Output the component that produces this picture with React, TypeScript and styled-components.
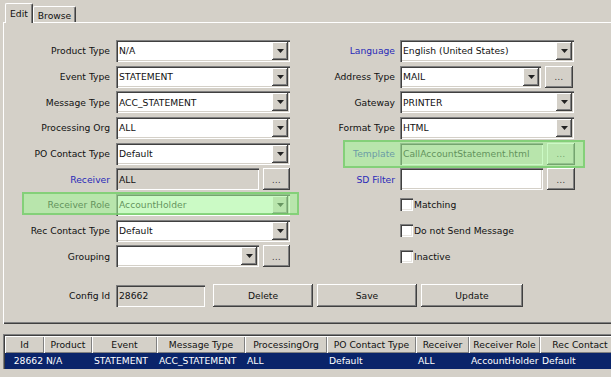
import React from 'react';
import styled, { createGlobalStyle } from 'styled-components';

const GlobalStyle = createGlobalStyle`
  html, body {
    margin: 0;
    padding: 0;
    overflow: hidden;
    background: #d4d0c8;
  }

  body {
    font-family: 'DejaVu Sans', 'Liberation Sans', sans-serif;
    font-size: 9.2px;
    color: #111;
  }
`;

const raised = `
  box-shadow: inset -1px -1px #404040, inset 1px 1px #fff, inset -2px -2px #808080;
`;

const sunken = `
  box-shadow: inset 1px 1px #808080, inset 2px 2px #404040, inset -1px -1px #fff, inset -2px -2px #d4d0c8;
`;

type Column = { title: string; width: number; value: string; align?: 'left' | 'right' };

const columns: Column[] = [
  { title: 'Id', width: 39, value: '28662', align: 'right' },
  { title: 'Product', width: 48, value: 'N/A' },
  { title: 'Event', width: 65, value: 'STATEMENT' },
  { title: 'Message Type', width: 88, value: 'ACC_STATEMENT' },
  { title: 'ProcessingOrg', width: 82, value: 'ALL' },
  { title: 'PO Contact Type', width: 89, value: 'Default' },
  { title: 'Receiver', width: 53, value: 'ALL' },
  { title: 'Receiver Role', width: 71, value: 'AccountHolder' },
  { title: 'Rec Contact', width: 80, value: 'Default' },
];

export default function App() {
  return (
    <Window>
      <GlobalStyle />
      <TabStrip>
        <Tab $active>Edit</Tab>
        <Tab>Browse</Tab>
      </TabStrip>

      <Panel>
        <Form>
          <ComboField label="Product Type" value="N/A" />
          <ComboField label="Event Type" value="STATEMENT" />
          <ComboField label="Message Type" value="ACC_STATEMENT" />
          <ComboField label="Processing Org" value="ALL" />
          <ComboField label="PO Contact Type" value="Default" />
          <Field>
            <Label $width={111} $gap={6} $link>Receiver</Label>
            <Control $width={174}>
              <InputBox $width={143} $disabled>
                <InputText>ALL</InputText>
              </InputBox>
              <DotsButton>...</DotsButton>
            </Control>
          </Field>
          <ComboField label="Receiver Role" value="AccountHolder" highlight="0 -9px 3px 17px" />
          <ComboField label="Rec Contact Type" value="Default" />
          <ComboField label="Grouping" value="" withDots />

          <ComboField side="right" label="Language" value="English (United States)" link />
          <ComboField side="right" label="Address Type" value="MAIL" withDots />
          <ComboField side="right" label="Gateway" value="PRINTER" />
          <ComboField side="right" label="Format Type" value="HTML" />
          <Field>
            <Label $width={110} $gap={5} $link>Template</Label>
            <Control $width={176}>
              <InputBox $width={143} $disabled>
                <InputText>CallAccountStatement.html</InputText>
              </InputBox>
              <DotsButton $width={28}>...</DotsButton>
            </Control>
            <Highlight $inset="-1px -9px -2px 53px" />
          </Field>
          <Field>
            <Label $width={110} $gap={5} $link>SD Filter</Label>
            <Control $width={176}>
              <InputBox $width={143}>
                <InputText />
              </InputBox>
              <DotsButton $width={28}>...</DotsButton>
            </Control>
          </Field>
          <CheckField label="Matching" />
          <CheckField label="Do not Send Message" />
          <CheckField label="Inactive" />
        </Form>

        <ConfigRow>
          <Label $width={111} $gap={6}>Config Id</Label>
          <InputBox $width={89} $disabled>
            <InputText>28662</InputText>
          </InputBox>
          <ButtonBar>
            <PushButton $width={100}>Delete</PushButton>
            <PushButton $width={100}>Save</PushButton>
            <PushButton $width={102}>Update</PushButton>
          </ButtonBar>
        </ConfigRow>
      </Panel>

      <ResultGrid>
        <HeaderRow>
          {columns.map(c => (
            <HeaderCell key={c.title} $width={c.width}>{c.title}</HeaderCell>
          ))}
        </HeaderRow>
        <DataRow>
          {columns.map(c => (
            <DataCell key={c.title} $width={c.width} $align={c.align}>{c.value}</DataCell>
          ))}
        </DataRow>
      </ResultGrid>
    </Window>
  );
}

const ComboField: React.FC<{
  readonly label: string;
  readonly value: string;
  readonly side?: 'left' | 'right';
  readonly link?: boolean;
  readonly withDots?: boolean;
  readonly highlight?: string;
}> = ({ label, value, side = 'left', link, withDots, highlight }) => (
  <Field>
    <Label $width={side === 'left' ? 111 : 110} $gap={side === 'left' ? 6 : 5} $link={link}>
      {label}
    </Label>
    <Control $width={side === 'left' ? 174 : 176}>
      <InputBox $width={withDots ? (side === 'left' ? 143 : 141) : 174}>
        <InputText>{value}</InputText>
        <ArrowButton>
          <svg width="7" height="4" viewBox="0 0 7 4">
            <path d="M0 0H7L3.5 4Z" fill="#222" />
          </svg>
        </ArrowButton>
      </InputBox>
      {withDots && <DotsButton $width={side === 'left' ? 27 : 28}>...</DotsButton>}
    </Control>
    {highlight && <Highlight $inset={highlight} />}
  </Field>
);

const CheckField: React.FC<{ readonly label: string }> = ({ label }) => (
  <Field>
    <Label $width={110} $gap={5} />
    <CheckBox />
    <CheckText>{label}</CheckText>
  </Field>
);

const Window = styled.div`
  position: relative;
  width: 611px;
  height: 377px;
  overflow: hidden;
  background: #d4d0c8;
`;

const TabStrip = styled.div`
  display: flex;
  align-items: flex-end;
  height: 22px;
  padding-left: 5px;
`;

const Tab = styled.div<{ $active?: boolean }>`
  position: relative;
  z-index: ${p => (p.$active ? 2 : 1)};
  display: flex;
  align-items: center;
  box-sizing: border-box;
  height: ${p => (p.$active ? 20 : 16)}px;
  margin-bottom: ${p => (p.$active ? -1 : 0)}px;
  padding: ${p => (p.$active ? '0 4px 1px' : '1px 4px 0')};
  background: #d4d0c8;
  border-top: 1px solid #fff;
  border-left: 1px solid #fff;
  border-right: 1px solid #404040;
  border-radius: 2px 2px 0 0;
  box-shadow: inset -1px 0 #808080;
  white-space: nowrap;
`;

const Panel = styled.div`
  box-sizing: border-box;
  width: 640px;
  margin-left: 3px;
  padding: 16px 0 17px 2px;
  box-shadow: inset 1px 1px #fff, inset -1px -1px #404040, inset -2px -2px #808080;
`;

const Form = styled.div`
  display: grid;
  grid-template-columns: 285px 286px;
  grid-template-rows: repeat(9, 25.7px);
  grid-auto-flow: column;
`;

const Field = styled.div`
  position: relative;
  display: flex;
  align-items: center;
`;

const Label = styled.span<{ $width: number; $gap: number; $link?: boolean }>`
  flex: none;
  box-sizing: border-box;
  width: ${p => p.$width}px;
  padding-right: ${p => p.$gap}px;
  text-align: right;
  white-space: nowrap;
  color: ${p => (p.$link ? '#2a2ab8' : '#111')};
`;

const Control = styled.div<{ $width: number }>`
  flex: none;
  display: flex;
  align-items: center;
  gap: 4px;
  width: ${p => p.$width}px;
`;

const InputBox = styled.div<{ $width: number; $disabled?: boolean }>`
  flex: none;
  display: flex;
  align-items: center;
  box-sizing: border-box;
  width: ${p => p.$width}px;
  height: 22px;
  padding: 2px;
  background: ${p => (p.$disabled ? '#d4d0c8' : '#fff')};
  ${sunken}
`;

const InputText = styled.span`
  flex: 1;
  padding-left: 1px;
  overflow: hidden;
  white-space: nowrap;
`;

const ArrowButton = styled.span`
  flex: none;
  display: flex;
  align-items: center;
  justify-content: center;
  width: 16px;
  height: 18px;
  background: #d4d0c8;
  ${raised}
`;

const DotsButton = styled.div<{ $width?: number }>`
  flex: none;
  display: flex;
  align-items: center;
  justify-content: center;
  width: ${p => p.$width ?? 27}px;
  height: 22px;
  padding-top: 2px;
  box-sizing: border-box;
  font-size: 8px;
  letter-spacing: 0.5px;
  color: #333;
  background: #d4d0c8;
  ${raised}
`;

const Highlight = styled.div<{ $inset: string }>`
  position: absolute;
  inset: ${p => p.$inset};
  box-sizing: border-box;
  background: rgba(160, 245, 150, 0.55);
  border: 2px solid rgba(110, 200, 100, 0.7);
  pointer-events: none;
`;

const CheckBox = styled.span`
  flex: none;
  width: 13px;
  height: 13px;
  background: #fff;
  box-shadow: inset 1px 1px #808080, inset 2px 2px #404040, inset -1px -1px #fff, inset -2px -2px #e8e6e2;
`;

const CheckText = styled.span`
  margin-left: 1px;
  white-space: nowrap;
`;

const ConfigRow = styled.div`
  display: flex;
  align-items: center;
  height: 23px;
  margin-top: 15px;
`;

const ButtonBar = styled.div`
  display: flex;
  gap: 4px;
  margin-left: 8px;
`;

const PushButton = styled.div<{ $width: number }>`
  display: flex;
  align-items: center;
  justify-content: center;
  width: ${p => p.$width}px;
  height: 23px;
  background: #d4d0c8;
  ${raised}
`;

const ResultGrid = styled.div`
  width: 640px;
  margin: 10px 0 0 3px;
  padding: 1px 0 0 1px;
  border-top: 1px solid #808080;
  border-left: 1px solid #808080;
  box-shadow: inset 1px 1px #404040;
`;

const HeaderRow = styled.div`
  display: flex;
  height: 17px;
`;

const HeaderCell = styled.div<{ $width: number }>`
  flex: none;
  display: flex;
  align-items: center;
  justify-content: center;
  box-sizing: border-box;
  width: ${p => p.$width}px;
  overflow: hidden;
  white-space: nowrap;
  background: #d4d0c8;
  box-shadow: inset 1px 1px #fff, inset -1px -1px #808080;
`;

const DataRow = styled.div`
  display: flex;
  height: 16px;
  background: #0a246a;
  color: #fff;
`;

const DataCell = styled.div<{ $width: number; $align?: 'left' | 'right' }>`
  flex: none;
  box-sizing: border-box;
  width: ${p => p.$width}px;
  padding: 0 ${p => (p.$align === 'right' ? 1 : 2)}px 0 2px;
  line-height: 16px;
  text-align: ${p => p.$align ?? 'left'};
  overflow: hidden;
  white-space: nowrap;
`;
